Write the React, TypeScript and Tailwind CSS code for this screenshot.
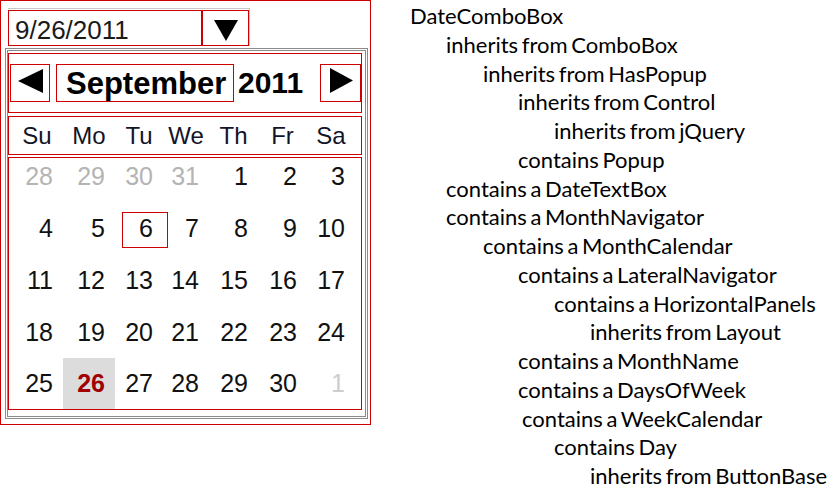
import React from "react";

const RED = "border-[#cc0000]";

type Day = { n: number; kind?: "other" | "faint" | "today" | "focus" };

const weeks: Day[][] = [
  [
    { n: 28, kind: "other" },
    { n: 29, kind: "other" },
    { n: 30, kind: "other" },
    { n: 31, kind: "other" },
    { n: 1 },
    { n: 2 },
    { n: 3 },
  ],
  [{ n: 4 }, { n: 5 }, { n: 6, kind: "focus" }, { n: 7 }, { n: 8 }, { n: 9 }, { n: 10 }],
  [{ n: 11 }, { n: 12 }, { n: 13 }, { n: 14 }, { n: 15 }, { n: 16 }, { n: 17 }],
  [{ n: 18 }, { n: 19 }, { n: 20 }, { n: 21 }, { n: 22 }, { n: 23 }, { n: 24 }],
  [
    { n: 25 },
    { n: 26, kind: "today" },
    { n: 27 },
    { n: 28 },
    { n: 29 },
    { n: 30 },
    { n: 1, kind: "faint" },
  ],
];

const dows = ["Su", "Mo", "Tu", "We", "Th", "Fr", "Sa"];

const tree: [number, string, number?][] = [
  [0, "DateComboBox"],
  [1, "inherits from ComboBox"],
  [2, "inherits from HasPopup"],
  [3, "inherits from Control"],
  [4, "inherits from jQuery"],
  [3, "contains Popup"],
  [1, "contains a DateTextBox"],
  [1, "contains a MonthNavigator"],
  [2, "contains a MonthCalendar"],
  [3, "contains a LateralNavigator"],
  [4, "contains a HorizontalPanels"],
  [5, "inherits from Layout"],
  [3, "contains a MonthName"],
  [3, "contains a DaysOfWeek"],
  [3, "contains a WeekCalendar", 4],
  [4, "contains Day"],
  [5, "inherits from ButtonBase"],
];

const indentClass = [
  "pl-0",
  "pl-[36px]",
  "pl-[73px]",
  "pl-[108px]",
  "pl-[144px]",
  "pl-[180px]",
];

function DayCell({ d, row }: { d: Day; row: number }) {
  let color = "text-[#111111]";
  let extra = "";
  if (d.kind === "other") color = "text-[#b4b4b4]";
  if (d.kind === "faint") color = "text-[#cdcdcd]";
  if (d.kind === "today") {
    color = "text-[#a00000] font-bold";
    extra = "bg-[#dcdcdc]";
  }
  return (
    <div
      className={`relative flex items-center justify-end pr-[10px] ${
        row === 0 ? "pb-[8px]" : ""
      } ${extra}`}
    >
      {d.kind === "focus" && (
        <span className={`absolute left-[7px] top-[10px] w-[46px] h-[36px] border ${RED}`} />
      )}
      <span className={`relative text-[25px] leading-none ${color}`}>{d.n}</span>
    </div>
  );
}

export default function App() {
  return (
    <div className="w-[836px] h-[484px] bg-white flex items-start overflow-hidden [font-family:'Liberation_Sans',Arial,sans-serif]">
      {/* Widget */}
      <div className={`w-[371px] h-[425px] border ${RED} flex flex-col shrink-0`}>
        {/* Combo */}
        <div className="ml-[7px] mt-[7px] w-[242px] border-t border-r border-[#c8c8c8] flex flex-col">
          <div className="mt-[1px] flex h-[36px]">
            <div
              className={`w-[194px] border ${RED} pl-[6px] pt-[3px] flex items-center text-[26px] leading-none text-[#1a1a1a]`}
            >
              9/26/2011
            </div>
            <div className={`w-[47px] border ${RED} flex items-center justify-center pt-[5px]`}>
              <svg width="24" height="21" viewBox="0 0 24 21">
                <polygon points="0,0 24,0 12,21" fill="#000" />
              </svg>
            </div>
          </div>
        </div>

        {/* Popup */}
        <div className="ml-[4px] mt-[2px] w-[363px] h-[371px] shrink-0 border-[3px] border-double border-[#8a8a8a] pt-[2px] flex flex-col">
          {/* Month navigator */}
          <div className={`w-[354px] h-[60px] shrink-0 border ${RED} flex items-center pl-[1px]`}>
            <div className={`w-[40px] h-[38px] border ${RED} flex items-center justify-center pb-[5px]`}>
              <svg width="25" height="24" viewBox="0 0 25 24">
                <polygon points="25,0 25,24 0,12" fill="#000" />
              </svg>
            </div>
            <div
              className={`ml-[6px] w-[178px] h-[38px] border ${RED} flex items-center pl-[9px] text-[31px] font-bold leading-none text-black`}
            >
              September
            </div>
            <div className="ml-[4px] text-[30px] font-bold leading-none text-black">2011</div>
            <div
              className={`ml-auto w-[41px] h-[38px] border ${RED} flex items-center justify-center pb-[6px] pl-[2px]`}
            >
              <svg width="23" height="25" viewBox="0 0 23 25">
                <polygon points="0,0 23,12.5 0,25" fill="#000" />
              </svg>
            </div>
          </div>

          {/* Days of week */}
          <div className={`mt-[3px] w-[354px] h-[39px] shrink-0 border ${RED} pl-[2px]`}>
            <div className="grid h-full grid-cols-[52px_52px_48px_46px_49px_49px_48px]">
              {dows.map((d) => (
                <div
                  key={d}
                  className="flex items-center justify-center text-[24px] leading-none text-[#141428]"
                >
                  {d}
                </div>
              ))}
            </div>
          </div>

          {/* Week calendar */}
          <div className={`mt-[2px] w-[354px] h-[253px] shrink-0 border ${RED} pl-[2px]`}>
            <div className="grid h-full grid-cols-[52px_52px_48px_46px_49px_49px_48px] grid-rows-[44px_52px_52px_52px_51px]">
              {weeks.map((w, ri) =>
                w.map((d, ci) => <DayCell key={`${ri}-${ci}`} d={d} row={ri} />)
              )}
            </div>
          </div>
        </div>
      </div>

      {/* Class tree */}
      <div className="ml-[39px] pt-[2px] flex flex-col text-[22px] leading-[28.75px] text-black [font-family:Lato,'Open_Sans',sans-serif] [word-spacing:-2px] whitespace-nowrap">
        {tree.map(([lvl, text, nudge], i) => (
          <div key={i} className={`${indentClass[lvl]} ${nudge ? "ml-[4px]" : ""}`}>
            {text}
          </div>
        ))}
      </div>
    </div>
  );
}
